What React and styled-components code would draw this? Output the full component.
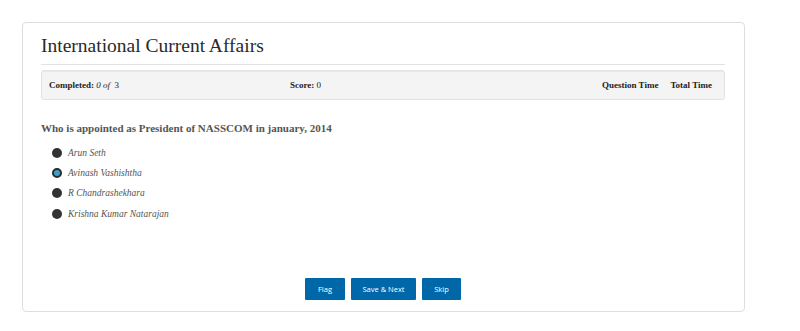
import React, { useState } from "react";
import styled, { createGlobalStyle } from "styled-components";

const GlobalStyle = createGlobalStyle`
  body {
    margin: 0;
    background: #fff;
    font-family: "Liberation Serif", serif;
  }
`;

const Page = styled.div`
  padding: 22px 55px 19px 22px;
`;

const Card = styled.div`
  border: 1px solid #dedede;
  border-radius: 4px;
  height: 288px;
  padding: 0 19px 0 18px;
  display: flex;
  flex-direction: column;
`;

const Title = styled.h1`
  margin: 0;
  padding: 12px 0 7px;
  font-family: "Liberation Serif", serif;
  font-weight: normal;
  font-size: 19.5px;
  color: #2a2a2a;
  border-bottom: 1px solid #e2e2e2;
`;

const StatusBar = styled.div`
  margin-top: 5px;
  height: 28px;
  padding: 0 12px 0 7px;
  background: #f4f4f4;
  border: 1px solid #e3e3e3;
  border-radius: 3px;
  box-shadow: inset 0 1px 1px rgba(0, 0, 0, 0.05);
  display: flex;
  align-items: center;
  font-size: 9px;
  color: #222;
`;

const Stat = styled.span`
  width: ${(p) => (p.w ? `${p.w}px` : "auto")};
  flex: ${(p) => (p.grow ? 1 : "none")};
  margin-left: ${(p) => p.gap || 0}px;
  b {
    font-weight: bold;
  }
  i {
    font-style: italic;
  }
`;

const Question = styled.h2`
  margin: 22px 0 13px;
  font-size: 11px;
  font-weight: bold;
  color: #555;
`;

const Options = styled.div`
  display: flex;
  flex-direction: column;
  gap: 9.4px;
  padding-left: 11px;
`;

const Option = styled.label`
  display: flex;
  align-items: center;
  gap: 6px;
  height: 11px;
  font-style: italic;
  font-size: 9.5px;
  color: #555;
  cursor: pointer;
`;

const Radio = styled.span`
  width: 10px;
  height: 10px;
  border-radius: 50%;
  box-sizing: border-box;
  background: ${(p) => (p.checked ? "#3aa0c8" : "#333")};
  border: ${(p) => (p.checked ? "2px solid #2b2b2b" : "none")};
`;

const Actions = styled.div`
  margin-top: auto;
  margin-bottom: 11px;
  display: flex;
  justify-content: center;
  gap: 6px;
`;

const Button = styled.button`
  height: 22px;
  width: ${(p) => p.w}px;
  border: none;
  border-radius: 1px;
  background: #0067a8;
  color: #fff;
  font-family: "Open Sans", sans-serif;
  font-size: 7.5px;
  padding: 0;
`;

const answers = [
  "Arun Seth",
  "Avinash Vashishtha",
  "R Chandrashekhara",
  "Krishna Kumar Natarajan",
];

export default function App() {
  const [picked, setPicked] = useState(1);
  return (
    <>
      <GlobalStyle />
      <Page>
        <Card>
          <Title>International Current Affairs</Title>
          <StatusBar>
            <Stat w={241}>
              <b>Completed:</b> <i>0 of</i>&nbsp; 3
            </Stat>
            <Stat grow>
              <b>Score:</b> 0
            </Stat>
            <Stat>
              <b>Question Time</b>
            </Stat>
            <Stat gap={12}>
              <b>Total Time</b>
            </Stat>
          </StatusBar>
          <Question>Who is appointed as President of NASSCOM in january, 2014</Question>
          <Options>
            {answers.map((a, i) => (
              <Option key={a} onClick={() => setPicked(i)}>
                <Radio checked={picked === i} />
                {a}
              </Option>
            ))}
          </Options>
          <Actions>
            <Button w={40}>Flag</Button>
            <Button w={65}>Save &amp; Next</Button>
            <Button w={39}>Skip</Button>
          </Actions>
        </Card>
      </Page>
    </>
  );
}
